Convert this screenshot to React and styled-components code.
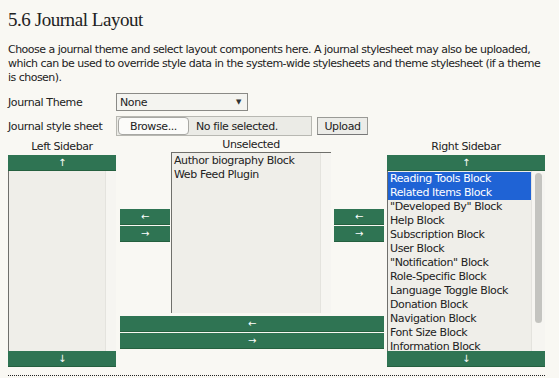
import React from "react";
import styled, { createGlobalStyle } from "styled-components";

const Global = createGlobalStyle`
  html, body { margin: 0; padding: 0; background: #f9f8f3; }
  body { font-family: "DejaVu Sans", Verdana, sans-serif; color: #222; }
`;

const Page = styled.div`
  padding: 9px 14px 0 8px;
  width: 537px;
  letter-spacing: -0.4px;
`;

const Title = styled.h2`
  font-family: "Liberation Serif", Georgia, serif;
  font-weight: normal;
  font-size: 19px;
  line-height: 22px;
  letter-spacing: -0.45px;
  margin: 0 0 12px 0;
  color: #222;
`;

const Para = styled.p`
  font-size: 11px;
  line-height: 14px;
  letter-spacing: -0.52px;
  margin: 0 0 8px 0;
`;

const FormRow = styled.div`
  display: flex;
  align-items: center;
  height: ${(p) => p.$h}px;
  margin-bottom: ${(p) => p.$mb || 0}px;
  font-size: 11px;
`;

const Label = styled.div`
  width: 108px;
`;

const Select = styled.div`
  width: 121px;
  height: 16px;
  border: 1px solid #8a8a86;
  background: #f4f4f0;
  display: flex;
  align-items: center;
  justify-content: space-between;
  padding: 0 6px 0 3px;
  box-sizing: content-box;
  font-size: 11px;
`;

const Caret = styled.span`
  font-size: 7px;
  color: #333;
`;

const FileBox = styled.div`
  width: 193px;
  height: 18px;
  border: 1px solid #b8b8b2;
  background: #ebebe6;
  display: flex;
  align-items: center;
  gap: 7px;
  padding-left: 1px;
`;

const BrowseBtn = styled.div`
  width: 69px;
  height: 16px;
  background: #fbfbf9;
  border: 1px solid #a8a8a4;
  border-radius: 4px;
  display: flex;
  align-items: center;
  justify-content: center;
  font-size: 11px;
`;

const UploadBtn = styled.div`
  margin-left: 5px;
  width: 49px;
  height: 16px;
  background: #ecece8;
  border: 1px solid #9a9a96;
  border-bottom-color: #777;
  display: flex;
  align-items: center;
  justify-content: center;
  font-size: 11px;
`;

const Board = styled.div`
  display: flex;
  margin-top: 4px;
`;

const SideCol = styled.div`
  width: ${(p) => p.$w}px;
  margin-left: ${(p) => p.$ml || 0}px;
  display: flex;
  flex-direction: column;
`;

const ColLabel = styled.div`
  font-size: 11px;
  height: ${(p) => p.$h || 15}px;
  line-height: ${(p) => p.$lh || 14}px;
  text-align: center;
`;

const GreenBtn = styled.div`
  background: #2f7453;
  color: #fff;
  height: 16px;
  display: flex;
  align-items: center;
  justify-content: center;
  font-size: 10px;
  line-height: 1;
  box-shadow: inset 0 -1px 0 #25603f;
`;

const ListBox = styled.div`
  height: ${(p) => p.$h}px;
  background: #efeee9;
  border-left: 1px solid #6f6f6b;
  border-top: ${(p) => (p.$top ? "1px solid #6f6f6b" : "none")};
  box-sizing: border-box;
  overflow: hidden;
  font-size: 11px;
  display: flex;
`;

const Items = styled.div`
  flex: 1;
  min-width: 0;
  padding-top: ${(p) => p.$pt || 0}px;
  display: flex;
  flex-direction: column;
`;

const Item = styled.div`
  height: 14px;
  flex: none;
  line-height: 14px;
  padding-left: 2px;
  white-space: nowrap;
  background: ${(p) => (p.$sel ? "#1f63d5" : "transparent")};
  color: ${(p) => (p.$sel ? "#fff" : "#222")};
`;

const Gutter = styled.div`
  width: ${(p) => p.$w}px;
  flex: none;
  background: #f6f5f1;
  border-left: 1px solid #e4e3de;
  position: relative;
`;

const Thumb = styled.div`
  position: absolute;
  left: 3px;
  right: 3px;
  top: 2px;
  height: 150px;
  border-radius: 4px;
  background: #c4c4c0;
`;

const Center = styled.div`
  margin-left: 4px;
  width: 264px;
  display: flex;
  flex-direction: column;
`;

const CenterTop = styled.div`
  display: flex;
  align-items: flex-start;
`;

const ArrowStack = styled.div`
  width: 50px;
  margin-top: ${(p) => p.$mt}px;
  margin-left: ${(p) => p.$ml || 0}px;
  display: flex;
  flex-direction: column;
  gap: 1px;
`;

const MidCol = styled.div`
  width: 160px;
  margin-left: 1px;
  display: flex;
  flex-direction: column;
`;

const WideStack = styled.div`
  margin-top: 3px;
  display: flex;
  flex-direction: column;
  gap: 1px;
`;

const Rule = styled.div`
  margin-top: 8px;
  border-top: 1px dotted #222;
  width: 537px;
`;

const rightItems = [
  "Reading Tools Block",
  "Related Items Block",
  "\"Developed By\" Block",
  "Help Block",
  "Subscription Block",
  "User Block",
  "\"Notification\" Block",
  "Role-Specific Block",
  "Language Toggle Block",
  "Donation Block",
  "Navigation Block",
  "Font Size Block",
  "Information Block",
];

export default function App() {
  return (
    <>
      <Global />
      <Page>
        <Title>5.6 Journal Layout</Title>
        <Para>
          Choose a journal theme and select layout components here. A journal stylesheet may also be uploaded,
          which can be used to override style data in the system-wide stylesheets and theme stylesheet (if a theme
          is chosen).
        </Para>
        <FormRow $h={18} $mb={5}>
          <Label>Journal Theme</Label>
          <Select>
            <span>None</span>
            <Caret>▼</Caret>
          </Select>
        </FormRow>
        <FormRow $h={20}>
          <Label>Journal style sheet</Label>
          <FileBox>
            <BrowseBtn>Browse...</BrowseBtn>
            <span>No file selected.</span>
          </FileBox>
          <UploadBtn>Upload</UploadBtn>
        </FormRow>
        <Board>
          <SideCol $w={108}>
            <ColLabel>Left Sidebar</ColLabel>
            <GreenBtn>↑</GreenBtn>
            <ListBox $h={180}>
              <Items />
              <Gutter $w={10} />
            </ListBox>
            <GreenBtn>↓</GreenBtn>
          </SideCol>
          <Center>
            <CenterTop>
              <ArrowStack $mt={69}>
                <GreenBtn>←</GreenBtn>
                <GreenBtn>→</GreenBtn>
              </ArrowStack>
              <MidCol>
                <ColLabel $h={12} $lh={9}>Unselected</ColLabel>
                <ListBox $h={161} $top>
                  <Items $pt={1}>
                    <Item>Author biography Block</Item>
                    <Item>Web Feed Plugin</Item>
                  </Items>
                  <Gutter $w={10} />
                </ListBox>
              </MidCol>
              <ArrowStack $mt={69} $ml={3}>
                <GreenBtn>←</GreenBtn>
                <GreenBtn>→</GreenBtn>
              </ArrowStack>
            </CenterTop>
            <WideStack>
              <GreenBtn>←</GreenBtn>
              <GreenBtn>→</GreenBtn>
            </WideStack>
          </Center>
          <SideCol $w={158} $ml={3}>
            <ColLabel>Right Sidebar</ColLabel>
            <GreenBtn>↑</GreenBtn>
            <ListBox $h={180}>
              <Items $pt={1}>
                {rightItems.map((t, i) => (
                  <Item key={t} $sel={i < 2}>
                    {t}
                  </Item>
                ))}
              </Items>
              <Gutter $w={13}>
                <Thumb />
              </Gutter>
            </ListBox>
            <GreenBtn>↓</GreenBtn>
          </SideCol>
        </Board>
        <Rule />
      </Page>
    </>
  );
}
